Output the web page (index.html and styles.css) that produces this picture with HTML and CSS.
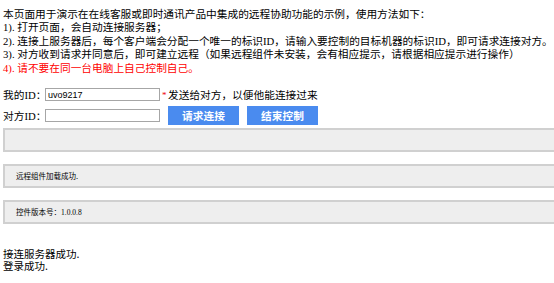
FILE: index.html
```html
<!DOCTYPE html>
<html lang="zh-CN">
<head>
    <meta charset="UTF-8">
    <title>远程协助示例</title>
    <link rel="stylesheet" href="styles.css">
</head>
<body>
    <div class="intro">
        <p>本页面用于演示在在线客服或即时通讯产品中集成的远程协助功能的示例，使用方法如下：</p>
        <p>1). 打开页面，会自动连接服务器；</p>
        <p>2). 连接上服务器后，每个客户端会分配一个唯一的标识ID，请输入要控制的目标机器的标识ID，即可请求连接对方。</p>
        <p>3). 对方收到请求并同意后，即可建立远程（如果远程组件未安装，会有相应提示，请根据相应提示进行操作）</p>
        <p class="warn">4). 请不要在同一台电脑上自己控制自己。</p>
    </div>

    <div class="form">
        <div class="row">
            <label for="myId">我的ID：</label>
            <input type="text" id="myId" value="uvo9217">
            <span class="star">*</span>
            <span class="hint">发送给对方，以便他能连接过来</span>
        </div>
        <div class="row">
            <label for="peerId">对方ID：</label>
            <input type="text" id="peerId">
            <button class="btn first">请求连接</button>
            <button class="btn">结束控制</button>
        </div>
    </div>

    <div class="boxes">
        <div class="box"></div>
        <div class="box">远程组件加载成功.</div>
        <div class="box">控件版本号：<span class="ver">1.0.0.8</span></div>
    </div>

    <div class="log">
        <div>接连服务器成功.</div>
        <div>登录成功.</div>
    </div>
</body>
</html>
```

FILE: styles.css
```css
html {
    overflow: hidden;
}
body {
    margin: 8px 0 0 3px;
    font-family: "Liberation Serif", "Noto Sans CJK SC", serif;
    font-size: 10.7px;
    color: #000;
    background: #fff;
}
.intro p {
    margin: 0;
    line-height: 13.4px;
}
.intro .warn {
    color: #f00;
}
.form {
    margin-top: 12px;
}
.row {
    display: flex;
    align-items: center;
}
.row + .row {
    margin-top: 4px;
}
label {
    flex: none;
    width: 42px;
    white-space: nowrap;
}
input {
    flex: none;
    width: 115px;
    height: 13px;
    box-sizing: border-box;
    border: 1px solid #a6a6a6;
    padding: 0 2px;
    margin: 0;
    font-family: "Liberation Sans", sans-serif;
    font-size: 9px;
    outline: none;
}
.star {
    color: #e00;
    font-size: 9px;
    margin-left: 2px;
    width: 6px;
}
.hint {
    white-space: nowrap;
}
.btn {
    flex: none;
    width: 71px;
    height: 19px;
    margin: 0 0 0 8px;
    padding: 0;
    border: none;
    background: #4a8bef;
    color: #fff;
    font-family: "Noto Sans CJK SC", sans-serif;
    font-size: 10.7px;
    font-weight: bold;
}
.boxes {
    display: flex;
    flex-direction: column;
    gap: 12px;
    margin: 3px -20px 0 0;
}
.box {
    height: 20px;
    padding-left: 11px;
    border: 2px solid #d0d0d0;
    background: #eeeeee;
    font-family: "Noto Sans CJK SC", sans-serif;
    font-size: 7.5px;
    line-height: 20px;
}
.box .ver {
    font-family: "Liberation Serif", serif;
}
.log {
    margin-top: 24px;
    font-family: "Noto Sans CJK SC", sans-serif;
    font-size: 10.5px;
    line-height: 12px;
}
```
